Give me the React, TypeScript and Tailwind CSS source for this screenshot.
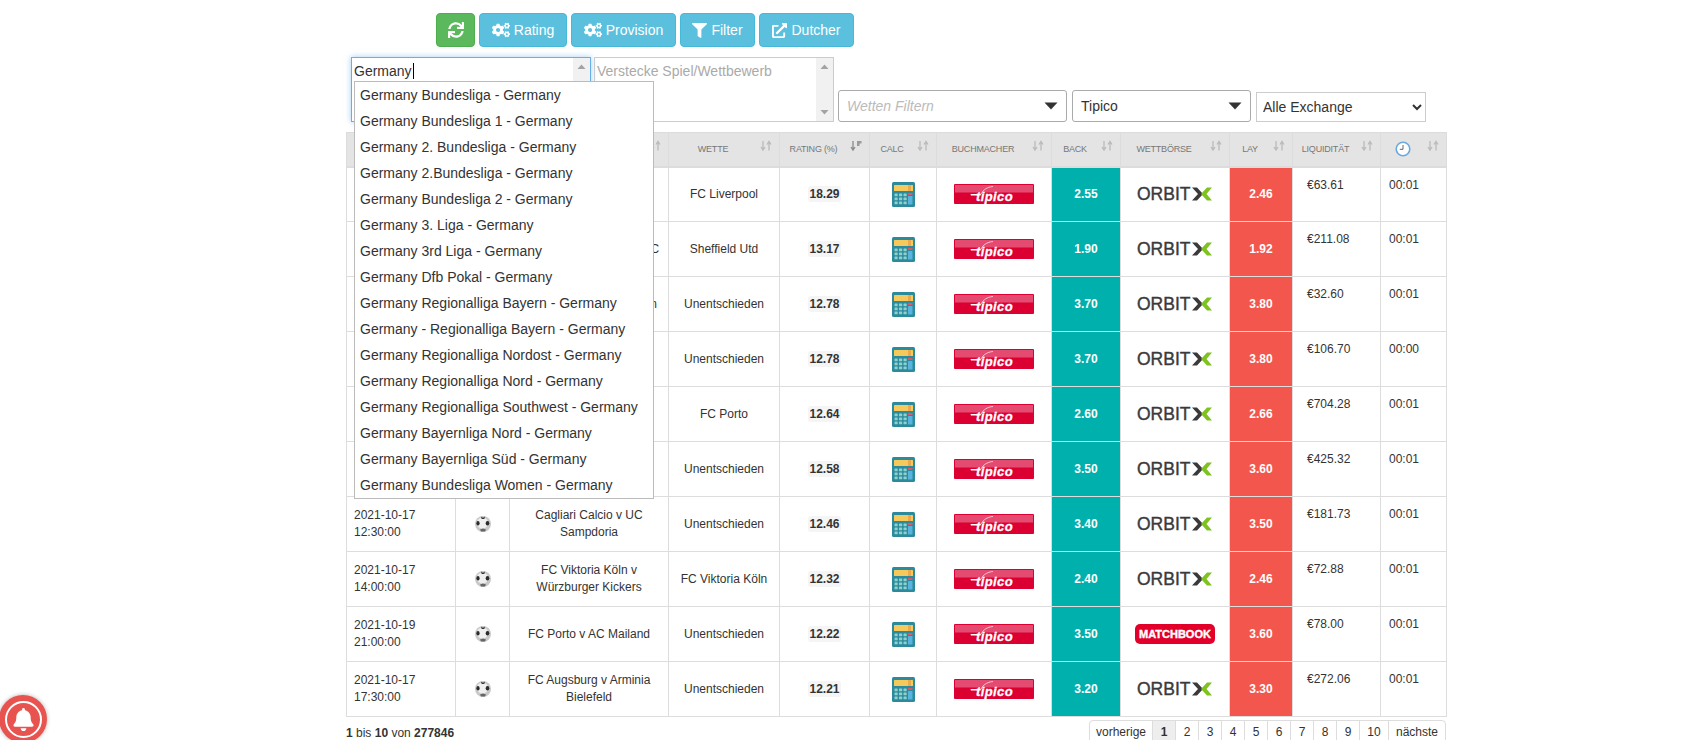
import { FaBell, FaCogs, FaExternalLinkAlt, FaFilter, FaSync } from "react-icons/fa";

const leagues = [
  "Germany Bundesliga - Germany",
  "Germany Bundesliga 1 - Germany",
  "Germany 2. Bundesliga - Germany",
  "Germany 2.Bundesliga - Germany",
  "Germany Bundesliga 2 - Germany",
  "Germany 3. Liga - Germany",
  "Germany 3rd Liga - Germany",
  "Germany Dfb Pokal - Germany",
  "Germany Regionalliga Bayern - Germany",
  "Germany - Regionalliga Bayern - Germany",
  "Germany Regionalliga Nordost - Germany",
  "Germany Regionalliga Nord - Germany",
  "Germany Regionalliga Southwest - Germany",
  "Germany Bayernliga Nord - Germany",
  "Germany Bayernliga Süd - Germany",
  "Germany Bundesliga Women - Germany",
];

const rows = [
  { date: "2021-10-17", time: "15:30:00", match: "FC Liverpool v Watford", bet: "FC Liverpool", rating: "18.29", back: "2.55", lay: "2.46", exchange: "orbit", liq: "€63.61", age: "00:01" },
  { date: "2021-10-17", time: "15:00:00", match: "Sheffield Utd v Fulham FC", bet: "Sheffield Utd", rating: "13.17", back: "1.90", lay: "1.92", exchange: "orbit", liq: "€211.08", age: "00:01" },
  { date: "2021-10-17", time: "13:00:00", match: "RB Leipzig v Union Berlin", bet: "Unentschieden", rating: "12.78", back: "3.70", lay: "3.80", exchange: "orbit", liq: "€32.60", age: "00:01" },
  { date: "2021-10-17", time: "13:00:00", match: "Mainz 05 v VfL Bochum", bet: "Unentschieden", rating: "12.78", back: "3.70", lay: "3.80", exchange: "orbit", liq: "€106.70", age: "00:00" },
  { date: "2021-10-19", time: "21:00:00", match: "FC Porto v AC Mailand", bet: "FC Porto", rating: "12.64", back: "2.60", lay: "2.66", exchange: "orbit", liq: "€704.28", age: "00:01" },
  { date: "2021-10-17", time: "14:00:00", match: "Hertha v SC Freiburg", bet: "Unentschieden", rating: "12.58", back: "3.50", lay: "3.60", exchange: "orbit", liq: "€425.32", age: "00:01" },
  { date: "2021-10-17", time: "12:30:00", match: "Cagliari Calcio v UC Sampdoria", bet: "Unentschieden", rating: "12.46", back: "3.40", lay: "3.50", exchange: "orbit", liq: "€181.73", age: "00:01" },
  { date: "2021-10-17", time: "14:00:00", match: "FC Viktoria Köln v Würzburger Kickers", bet: "FC Viktoria Köln", rating: "12.32", back: "2.40", lay: "2.46", exchange: "orbit", liq: "€72.88", age: "00:01" },
  { date: "2021-10-19", time: "21:00:00", match: "FC Porto v AC Mailand", bet: "Unentschieden", rating: "12.22", back: "3.50", lay: "3.60", exchange: "matchbook", liq: "€78.00", age: "00:01" },
  { date: "2021-10-17", time: "17:30:00", match: "FC Augsburg v Arminia Bielefeld", bet: "Unentschieden", rating: "12.21", back: "3.20", lay: "3.30", exchange: "orbit", liq: "€272.06", age: "00:01" },
];

const columns = [
  { label: "", width: "w-[109px]" },
  { label: "", width: "w-[54px]" },
  { label: "", width: "w-[159px]" },
  { label: "Wette", width: "w-[111px]" },
  { label: "Rating (%)", width: "w-[90px]" },
  { label: "Calc", width: "w-[67px]" },
  { label: "Buchmacher", width: "w-[115px]" },
  { label: "Back", width: "w-[69px]" },
  { label: "Wettbörse", width: "w-[109px]" },
  { label: "Lay", width: "w-[63px]" },
  { label: "Liquidität", width: "w-[88px]" },
  { label: "clock", width: "w-[66px]" },
];

const pages = ["1", "2", "3", "4", "5", "6", "7", "8", "9"];

const SortIcon = ({ active }: { active?: boolean }) => (
  <svg width="12" height="12" viewBox="0 0 12 11" className="absolute right-[7px] top-[7px]">
    <path d="M3 0.500v8M1 6.500L3 9.500L5 6.500" fill="none" stroke={active ? "#8a8a8a" : "#bbb"} strokeWidth="1.300" />
    {active ? (
      <path d="M7 0.500h4.500v2.500h-2v2.500h-2.500z" fill="#9a9a9a" />
    ) : (
      <path d="M9 10V2M7 4L9 1L11 4" fill="none" stroke="#bbb" strokeWidth="1.300" />
    )}
  </svg>
);

const ClockIcon = () => (
  <svg width="16" height="16" viewBox="0 0 16 16" className="inline-block">
    <circle cx="8" cy="8" r="6.800" fill="#fff" stroke="#6aa9e0" strokeWidth="1.600" />
    <path d="M8 4v4.300H4.800" fill="none" stroke="#666" strokeWidth="1" />
  </svg>
);

const Calculator = () => (
  <svg width="23" height="25" viewBox="0 0 23 25" className="mx-auto block">
    <rect width="23" height="25" rx="1.500" fill="#2b8a9b" />
    <rect x="2" y="3" width="19" height="6" rx="0.500" fill="#f6c95c" />
    <rect x="16" y="3" width="3" height="6" fill="#f0a94a" />
    {[11.5, 15.5, 19.5].map((y) =>
      [2.5, 7, 11.5].map((x) => <rect key={`${x}-${y}`} x={x} y={y} width="3.200" height="2.800" rx="0.500" fill="#8fd0cc" />),
    )}
    <rect x="16" y="11" width="4.500" height="2" fill="#d75b6b" />
    <rect x="16" y="14" width="4.500" height="8.500" rx="0.500" fill="#58b4de" />
  </svg>
);

const SoccerBall = () => (
  <svg width="16" height="16" viewBox="0 0 16 16" className="mx-auto block">
    <circle cx="8" cy="8" r="8" fill="#c9c9c9" />
    <circle cx="7.500" cy="7" r="5.500" fill="#efefef" />
    <path d="M6 0.500L8 1.800L10 0.500L9.300 3H6.700z" fill="#333" />
    <ellipse cx="3" cy="7.200" rx="1.600" ry="2.300" fill="#2b2b2b" />
    <ellipse cx="12.500" cy="7.200" rx="1.800" ry="2.300" fill="#2b2b2b" />
    <path d="M5 13.500L8 12.500L11 13.500L10 15.600H6z" fill="#666" />
  </svg>
);

const TipicoLogo = () => (
  <svg width="80" height="20" viewBox="0 0 80 20" className="mx-auto block">
    <rect width="80" height="20" rx="1" fill="#dc0032" />
    <rect x="1" y="1" width="78" height="7.500" fill="#e54a70" />
    <path d="M27 10C29 6 33 3 39 2.500" fill="none" stroke="#f7c4d0" strokeWidth="1" />
    <path d="M16.500 10h9l-0.500 1.500h-8z" fill="#fff" />
    <text x="22" y="16.500" fontFamily="Liberation Sans" fontSize="13" fontWeight="700" fontStyle="italic" letterSpacing="0.400" stroke="#fff" strokeWidth="0.300" fill="#fff">
      tipico
    </text>
  </svg>
);

const OrbitLogo = () => (
  <svg width="76" height="16" viewBox="0 0 76 16" className="mx-auto block">
    <text x="0" y="14" fontFamily="Liberation Sans" fontSize="17.500" stroke="#3a3a3a" strokeWidth="0.400" fill="#3a3a3a">
      ORBIT
    </text>
    <path d="M55 1.500h5l6 6.500l-6 6.500h-5l6-6.500z" fill="#3a3a3a" />
    <path d="M75 1.500h-5l-6 6.500l6 6.500h5l-5.500-6.500z" fill="#7ec220" />
  </svg>
);

const MatchbookLogo = () => (
  <svg width="80" height="20" viewBox="0 0 80 20" className="mx-auto block">
    <rect width="80" height="20" rx="5" fill="#e2002b" />
    <text x="4" y="14" fontFamily="Liberation Sans" fontSize="11" fontWeight="700" stroke="#fff" strokeWidth="0.400" fill="#fff">
      MATCHBOOK
    </text>
  </svg>
);

const ScrollStrip = () => (
  <div className="flex w-[17px] flex-col justify-between bg-[#f1f1f1] py-[6px]">
    <svg width="17" height="6" viewBox="0 0 17 6"><path d="M8.500 0.500L12.500 5H4.500z" fill="#a3a3a3" /></svg>
    <svg width="17" height="6" viewBox="0 0 17 6"><path d="M8.500 5.500L12.500 1H4.500z" fill="#a3a3a3" /></svg>
  </div>
);

const Caret = () => (
  <svg width="14" height="8" viewBox="0 0 14 8"><path d="M0.500 0.500h13L7 7.500z" fill="#333" /></svg>
);

const App = () => {
  return (
    <div className="relative h-[740px] w-full overflow-hidden bg-white pl-[346px] pt-[13px] font-['Liberation_Sans',sans-serif] text-[#333]">
      <div className="w-[1100px]">
        {/* Buttons */}
        <div className="ml-[90px] flex gap-[4px] text-[14px] text-white">
          <button className="flex h-[34px] w-[39px] items-center justify-center rounded border border-[#4cae4c] bg-[#5cb85c]">
            <FaSync size={16} />
          </button>
          <button className="flex h-[34px] w-[88px] items-center justify-center gap-[4px] rounded border border-[#46b8da] bg-[#5bc0de]">
            <FaCogs size={18} /> Rating
          </button>
          <button className="flex h-[34px] w-[105px] items-center justify-center gap-[4px] rounded border border-[#46b8da] bg-[#5bc0de]">
            <FaCogs size={18} /> Provision
          </button>
          <button className="flex h-[34px] w-[75px] items-center justify-center gap-[4px] rounded border border-[#46b8da] bg-[#5bc0de]">
            <FaFilter size={15} /> Filter
          </button>
          <button className="flex h-[34px] w-[95px] items-center justify-center gap-[4px] rounded border border-[#46b8da] bg-[#5bc0de]">
            <FaExternalLinkAlt size={15} /> Dutcher
          </button>
        </div>

        {/* Filters */}
        <div className="mt-[10px] flex h-[65px] items-end text-[14px]">
          <div className="ml-[5px] flex h-[65px] w-[240px] border border-[#66afe9] shadow-[0_0_6px_rgba(102,175,233,0.6)]">
            <div className="flex-1 pl-[2px] pt-[3px] leading-[20px]">
              Germany<span className="ml-px inline-block h-[16px] w-px bg-black align-[-3px]" />
            </div>
            <ScrollStrip />
          </div>
          <div className="ml-[3px] flex h-[65px] w-[240px] border border-[#ccc]">
            <div className="flex-1 pl-[2px] pt-[3px] leading-[20px] text-[#aaa]">Verstecke Spiel/Wettbewerb</div>
            <ScrollStrip />
          </div>
          <div className="ml-[4px] flex h-[32px] w-[229px] items-center justify-between rounded-[3px] border border-[#aaa] pl-[8px] pr-[8px] italic text-[#bbb]">
            Wetten Filtern
            <Caret />
          </div>
          <div className="ml-[5px] flex h-[32px] w-[179px] items-center justify-between rounded-[3px] border border-[#aaa] pl-[8px] pr-[8px]">
            Tipico
            <Caret />
          </div>
          <select className="ml-[5px] h-[30px] w-[170px] border border-[#ccc] bg-white pl-[2px]">
            <option>Alle Exchange</option>
          </select>
        </div>

        {/* Table */}
        <table className="mt-[10px] w-[1100px] table-fixed border-collapse text-[12px]">
          <colgroup>
            {columns.map((c, i) => (
              <col key={i} className={c.width} />
            ))}
          </colgroup>
          <thead>
            <tr className="h-[34px] bg-[#e4e4e4]">
              {columns.map((c, i) => (
                <th
                  key={i}
                  className="relative border border-b-2 border-[#dcdcdc] pr-[22px] text-center text-[9px] font-normal uppercase tracking-[-0.2px] text-[#777]"
                >
                  {c.label === "clock" ? <ClockIcon /> : c.label}
                  <SortIcon active={c.label === "Rating (%)"} />
                </th>
              ))}
            </tr>
          </thead>
          <tbody>
            {rows.map((r, i) => (
              <tr key={i} className="h-[55px]">
                <td className="border border-[#ddd] pb-2 pl-[7px] pr-2 pt-[10px] align-top leading-[17px]">
                  {r.date}
                  <br />
                  {r.time}
                </td>
                <td className="border border-[#ddd] align-middle">
                  <SoccerBall />
                </td>
                <td className="border border-[#ddd] px-2 text-center align-middle leading-[17px]">{r.match}</td>
                <td className="border border-[#ddd] text-center align-middle">{r.bet}</td>
                <td className="border border-[#ddd] text-center align-middle">
                  <span className="rounded-[3px] bg-[#f5f5f5] px-[1px] py-[1px] font-bold">{r.rating}</span>
                </td>
                <td className="border border-[#ddd] align-middle">
                  <Calculator />
                </td>
                <td className="border border-[#ddd] align-middle">
                  <TipicoLogo />
                </td>
                <td className="border border-[#ddd] bg-[#00b0ad] text-center align-middle font-bold text-white">{r.back}</td>
                <td className="border border-[#ddd] align-middle">
                  {r.exchange === "orbit" ? <OrbitLogo /> : <MatchbookLogo />}
                </td>
                <td className="border border-[#ddd] bg-[#f3564c] text-center align-middle font-bold text-white">{r.lay}</td>
                <td className="border border-[#ddd] pb-2 pl-[14px] pt-[9px] align-top leading-[17px]">{r.liq}</td>
                <td className="border border-[#ddd] pb-2 pl-2 pr-2 pt-[9px] align-top leading-[17px]">{r.age}</td>
              </tr>
            ))}
          </tbody>
        </table>

        {/* Footer */}
        <div className="mt-[3px] flex items-start justify-between text-[12px]">
          <div className="pt-[5px] leading-[17px]">
            <b>1</b> bis <b>10</b> von <b>277846</b>
          </div>
          <div className="flex h-[32px] rounded-t border border-[#ddd] leading-[22px]">
            <div className="w-[62px] text-center">vorherige</div>
            {pages.map((p, i) => (
              <div
                key={p}
                className={
                  i === 0
                    ? "w-[23px] border-l border-[#ddd] bg-[#eeeeee] text-center font-bold"
                    : "w-[23px] border-l border-[#ddd] text-center"
                }
              >
                {p}
              </div>
            ))}
            <div className="w-[29px] border-l border-[#ddd] text-center">10</div>
            <div className="w-[57px] border-l border-[#ddd] text-center">nächste</div>
          </div>
        </div>
      </div>

      {/* League suggestions */}
      <div className="absolute left-[354px] top-[81px] w-[300px] border border-[#bbb] bg-white pl-[5px] text-[14px]">
        {leagues.map((l) => (
          <div key={l} className="h-[26px] whitespace-nowrap leading-[26px]">
            {l}
          </div>
        ))}
      </div>

      {/* Notification bell */}
      <div className="absolute left-[-1px] top-[695px] flex h-[48px] w-[48px] items-center justify-center rounded-full bg-[#e8534f] shadow-[0_0_4px_rgba(0,0,0,0.3)]">
        <div className="flex h-[37px] w-[37px] items-center justify-center rounded-full border-2 border-white">
          <FaBell size={23} color="#fff" />
        </div>
      </div>
    </div>
  );
};

export default App;
